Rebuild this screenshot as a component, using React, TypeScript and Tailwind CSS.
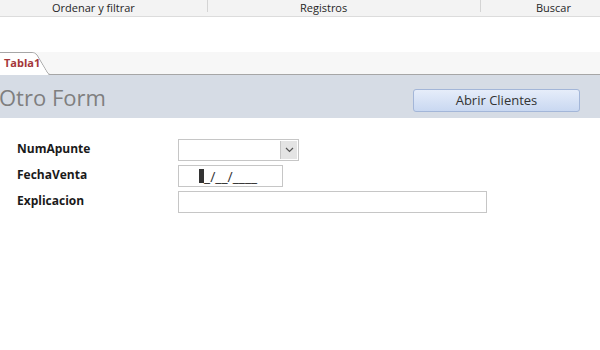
import React from "react";

const font = { fontFamily: '"Open Sans", "Noto Sans", "Liberation Sans", sans-serif' };

function RibbonGroups() {
  return (
    <div className="flex h-[17px] bg-[#f3f3f3] border-b border-[#dcdcdc] text-[11px] leading-[15px] text-[#262626]">
      <div className="w-[208px] border-r border-[#d4d4d4] mb-[4px] pl-[52px]">Ordenar y filtrar</div>
      <div className="w-[273px] border-r border-[#d4d4d4] mb-[4px] pl-[92px]">Registros</div>
      <div className="flex-1 pl-[55px]">Buscar</div>
    </div>
  );
}

function TabStrip() {
  return (
    <div className="mt-[35px] h-[23px] bg-[#f7f7f7] border-b border-[#a6a6a6] flex items-end">
      <div className="relative w-[50px] h-[23px] -mb-px">
        <svg className="absolute inset-0" width="50" height="23" viewBox="0 0 50 23">
          <path d="M0 0.5 H32 Q35 0.5 37 3 L47 20 Q48.5 22.5 50 22.5" fill="#ffffff" stroke="#a6a6a6" strokeWidth="1" />
          <path d="M0 1 H32 Q35 1 36.5 3.5 L46.5 20 Q48 22.5 49 23 H0 Z" fill="#ffffff" />
        </svg>
        <span className="relative block pl-[4px] pt-[5px] text-[11px] leading-[12px] font-bold text-[#a4373a]">Tabla1</span>
      </div>
    </div>
  );
}

function Header() {
  return (
    <div className="h-[43px] bg-[#d6dce5] flex items-center justify-between pr-[20px]">
      <div className="text-[22px] leading-[28px] text-[#7f7f7f] -ml-[1px] mt-[1px]">Otro Form</div>
      <button className="w-[167px] h-[23px] mt-[7px] rounded-[3px] border border-[#a3b6d8] bg-gradient-to-b from-[#e6edfa] to-[#c9d8f1] text-[13px] leading-[16px] text-[#333333]">
        Abrir Clientes
      </button>
    </div>
  );
}

function Field({ label, children }: { label: string; children: React.ReactNode }) {
  return (
    <div className="flex items-center">
      <div className="w-[161px] -mt-[3px] text-[12px] font-bold text-[#1a1a1a]">{label}</div>
      {children}
    </div>
  );
}

export default function App() {
  return (
    <div className="w-[600px] h-[350px] bg-white overflow-hidden" style={font}>
      <RibbonGroups />
      <TabStrip />
      <Header />
      <div className="pl-[17px] pt-[21px] flex flex-col gap-[4px]">
        <Field label="NumApunte">
          <div className="w-[121px] h-[22px] border border-[#c6c6c6] flex justify-end p-[1px]">
            <div className="w-[17px] h-full bg-[#e4e4e4] border-l border-[#c6c6c6] flex items-center justify-center">
              <svg width="9" height="6" viewBox="0 0 9 6">
                <path d="M1 1 L4.5 4.5 L8 1" fill="none" stroke="#555" strokeWidth="1.2" />
              </svg>
            </div>
          </div>
        </Field>
        <Field label="FechaVenta">
          <div className="w-[105px] h-[22px] border border-[#c6c6c6] flex items-center pl-[20px] text-[14px] text-[#333]">
            <span className="inline-block w-[5px] h-[14px] bg-[#333]" />
            <span>_/__/____</span>
          </div>
        </Field>
        <Field label="Explicacion">
          <div className="w-[309px] h-[22px] border border-[#c6c6c6]" />
        </Field>
      </div>
    </div>
  );
}
